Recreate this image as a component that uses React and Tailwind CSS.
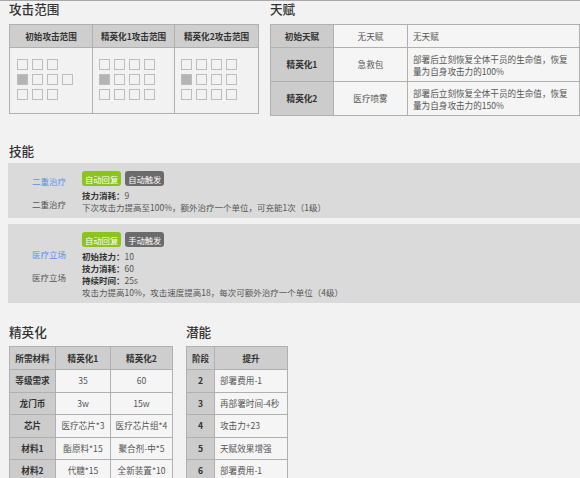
import React from "react";

const font = { fontFamily: '"Noto Sans CJK SC", "Noto Sans", sans-serif' };

// 攻击范围 grid: 1 = empty cell, 2 = operator position, 0 = blank
const ranges = [
  { title: "初始攻击范围", rows: [[1, 1, 1, 0], [2, 1, 1, 1], [1, 1, 1, 0]] },
  { title: "精英化1攻击范围", rows: [[1, 1, 1, 1], [2, 1, 1, 1], [1, 1, 1, 1]] },
  { title: "精英化2攻击范围", rows: [[1, 1, 1, 1], [2, 1, 1, 1], [1, 1, 1, 1]] },
];

const talents = [
  { stage: "初始天赋", name: "无天赋", desc: "无天赋", h: "h-[23px]" },
  { stage: "精英化1", name: "急救包", desc: "部署后立刻恢复全体干员的生命值，恢复量为自身攻击力的100%", h: "h-[34px]" },
  { stage: "精英化2", name: "医疗喷雾", desc: "部署后立刻恢复全体干员的生命值，恢复量为自身攻击力的150%", h: "h-[34px]" },
];

const elite = [
  ["等级需求", "35", "60"],
  ["龙门币", "3w", "15w"],
  ["芯片", "医疗芯片*3", "医疗芯片组*4"],
  ["材料1", "酯原料*15", "聚合剂-中*5"],
  ["材料2", "代糖*15", "全新装置*10"],
];

const potential = [
  ["2", "部署费用-1"],
  ["3", "再部署时间-4秒"],
  ["4", "攻击力+23"],
  ["5", "天赋效果增强"],
  ["6", "部署费用-1"],
];

function RangeGrid({ rows }) {
  return (
    <div className="flex flex-col gap-[4px]">
      {rows.map((r, i) => (
        <div key={i} className="flex gap-[4px]">
          {r.map((c, j) =>
            c === 0 ? (
              <div key={j} className="w-[11px] h-[11px]" />
            ) : (
              <div
                key={j}
                className={`w-[11px] h-[11px] border-[1.5px] border-[#bdbdbd] ${c === 2 ? "bg-[#b4b4b4]" : ""}`}
              />
            )
          )}
        </div>
      ))}
    </div>
  );
}

function Tag({ color, children }) {
  return (
    <span className={`inline-flex items-center h-[15px] px-[3px] rounded-[3px] text-white text-[8.3px] ${color}`}>
      {children}
    </span>
  );
}

function SkillBox({ name, tags, lines, desc }) {
  return (
    <div className="flex bg-[#dadada] ml-2 pt-[8px] pb-[5px]">
      <div className="w-[74px] pl-[24px] flex flex-col justify-center gap-[11px] text-[8.5px] leading-[12px]">
        <span className="text-[#5b8ff0]">{name}</span>
        <span className="text-[#555]">{name}</span>
      </div>
      <div className="flex flex-col text-[8.5px] leading-[12px] text-[#555]">
        <div className="flex gap-[4px] mb-[3px]">
          <Tag color="bg-[#8cc31f]">自动回复</Tag>
          <Tag color="bg-[#6b6b6b]">{tags}</Tag>
        </div>
        {lines.map(([k, v]) => (
          <div key={k}>
            <span className="font-bold text-[#333]">{k}：</span>
            {v}
          </div>
        ))}
        <div>{desc}</div>
      </div>
    </div>
  );
}

const cell = "border border-[#b0b0b0]";

export default function App() {
  return (
    <div className="w-[580px] h-[478px] overflow-hidden bg-[#f2f2f2] border-t border-[#a8a8a8]" style={font}>
      {/* top: 攻击范围 + 天赋 */}
      <div className="flex pl-[9px] gap-[11px]">
        <div>
          <h2 className="text-[12.6px] leading-[15px] font-medium text-[#333] mb-[8px]">攻击范围</h2>
          <table className="border-collapse">
            <thead>
              <tr className="h-[23px] bg-[#cecece]">
                {ranges.map((r, i) => (
                  <th
                    key={i}
                    className={`${cell} text-[8.6px] font-bold text-[#333] ${i === 0 ? "w-[83px]" : i === 1 ? "w-[82px]" : "w-[84px]"}`}
                  >
                    {r.title}
                  </th>
                ))}
              </tr>
            </thead>
            <tbody>
              <tr className="h-[66px]">
                {ranges.map((r, i) => (
                  <td key={i} className={`${cell} align-top pt-[11px] ${i === 0 ? "pl-[7px]" : "pl-[6px]"}`}>
                    <RangeGrid rows={r.rows} />
                  </td>
                ))}
              </tr>
            </tbody>
          </table>
        </div>

        <div>
          <h2 className="text-[12.6px] leading-[15px] font-medium text-[#333] mb-[8px]">天赋</h2>
          <table className="border-collapse text-[8.6px]">
            <tbody>
              {talents.map((t) => (
                <tr key={t.stage} className={t.h}>
                  <td className={`${cell} w-[63px] bg-[#cccccc] text-center font-bold text-[#333]`}>{t.stage}</td>
                  <td className={`${cell} w-[74px] bg-[#f5f5f5] text-center text-[#555]`}>{t.name}</td>
                  <td className={`${cell} w-[172px] bg-[#f5f5f5] px-[5px] leading-[12px] text-[#555]`}>{t.desc}</td>
                </tr>
              ))}
            </tbody>
          </table>
        </div>
      </div>

      {/* 技能 */}
      <h2 className="text-[12.6px] leading-[15px] font-medium text-[#333] ml-[9px] mt-[27px] mb-[5px]">技能</h2>
      <SkillBox
        name="二重治疗"
        tags="自动触发"
        lines={[["技力消耗", "9"]]}
        desc="下次攻击力提高至100%，额外治疗一个单位，可充能1次（1级）"
      />
      <div className="h-[6px]" />
      <SkillBox
        name="医疗立场"
        tags="手动触发"
        lines={[
          ["初始技力", "10"],
          ["技力消耗", "60"],
          ["持续时间", "25s"],
        ]}
        desc="攻击力提高10%，攻击速度提高18，每次可额外治疗一个单位（4级）"
      />

      {/* 精英化 + 潜能 */}
      <div className="flex pl-[9px] gap-[13px] mt-[21px]">
        <div>
          <h2 className="text-[12.6px] leading-[15px] font-medium text-[#333] mb-[7px]">精英化</h2>
          <table className="border-collapse text-[8.6px]">
            <thead>
              <tr className="h-[23px] bg-[#cecece] text-[#333]">
                <th className={`${cell} w-[46px] font-bold`}>所需材料</th>
                <th className={`${cell} w-[55px] font-bold`}>精英化1</th>
                <th className={`${cell} w-[62px] font-bold`}>精英化2</th>
              </tr>
            </thead>
            <tbody>
              {elite.map((r) => (
                <tr key={r[0]} className="h-[22.5px]">
                  <td className={`${cell} bg-[#cccccc] text-center font-bold text-[#333]`}>{r[0]}</td>
                  <td className={`${cell} bg-[#f5f5f5] text-center text-[#555]`}>{r[1]}</td>
                  <td className={`${cell} bg-[#f5f5f5] text-center text-[#555]`}>{r[2]}</td>
                </tr>
              ))}
            </tbody>
          </table>
        </div>

        <div>
          <h2 className="text-[12.6px] leading-[15px] font-medium text-[#333] mb-[7px]">潜能</h2>
          <table className="border-collapse text-[8.6px]">
            <thead>
              <tr className="h-[23px] bg-[#cecece] text-[#333]">
                <th className={`${cell} w-[28px] font-bold`}>阶段</th>
                <th className={`${cell} w-[73px] font-bold`}>提升</th>
              </tr>
            </thead>
            <tbody>
              {potential.map((r) => (
                <tr key={r[0]} className="h-[22.5px]">
                  <td className={`${cell} bg-[#cccccc] text-center font-bold text-[#333]`}>{r[0]}</td>
                  <td className={`${cell} bg-[#f5f5f5] px-[5px] text-[#555]`}>{r[1]}</td>
                </tr>
              ))}
            </tbody>
          </table>
        </div>
      </div>
    </div>
  );
}
